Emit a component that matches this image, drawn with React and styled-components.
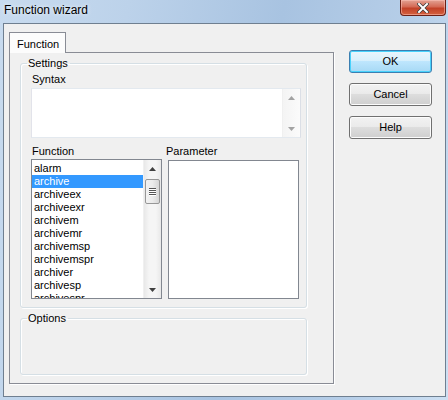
import React from "react";
import styled, { createGlobalStyle } from "styled-components";

const GlobalStyle = createGlobalStyle`
  html, body {
    margin: 0;
    padding: 0;
    background: #ffffff;
  }
  body {
    font-family: "Liberation Sans", Arial, sans-serif;
    font-size: 11px;
    color: #000;
  }
`;

const Window = styled.div`
  width: 448px;
  height: 400px;
  box-sizing: border-box;
  display: flex;
  flex-direction: column;
  padding: 0 2px 3px 3px;
  background: linear-gradient(
    100deg,
    #c8dbef 0%,
    #bcd2ea 25%,
    #a8c3e1 55%,
    #b6cee8 80%,
    #cde0f3 100%
  );
`;

const TitleBar = styled.div`
  height: 23px;
  display: flex;
  align-items: flex-start;
  justify-content: space-between;
`;

const Title = styled.span`
  font-size: 12px;
  line-height: 15px;
  margin-top: 3px;
  margin-left: 1px;
  color: #000;
  text-shadow: 0 0 4px rgba(255, 255, 255, 0.9);
`;

const CloseButton = styled.div`
  width: 46px;
  height: 16px;
  box-sizing: border-box;
  border: 1px solid #6b2016;
  border-top: none;
  border-radius: 0 0 4px 4px;
  background: linear-gradient(180deg, #e3a294 0%, #d46a55 45%, #c24128 55%, #d4613f 100%);
  display: flex;
  align-items: center;
  justify-content: center;
  box-shadow: inset 0 0 0 1px rgba(255, 200, 190, 0.5);
`;

const Client = styled.div`
  flex: 1;
  display: flex;
  background: #f0f0f0;
  border: 1px solid #6f7f90;
  padding: 8px 0 0 5px;
`;

const TabArea = styled.div`
  width: 325px;
  display: flex;
  flex-direction: column;
`;

const TabStrip = styled.div`
  display: flex;
  height: 20px;
  position: relative;
  z-index: 1;
`;

const Tab = styled.div`
  width: 57px;
  height: 21px;
  box-sizing: border-box;
  border: 1px solid #898c95;
  border-bottom: none;
  background: #fcfcfc;
  padding: 5px 0 0 7px;
  line-height: 13px;
`;

const TabPanel = styled.div`
  width: 325px;
  height: 332px;
  box-sizing: border-box;
  border: 1px solid #898c95;
  box-shadow: 1px 1px 0 #ffffff;
  background: #f0f0f0;
  padding: 4px 0 0 10px;
  display: flex;
  flex-direction: column;
  gap: 4px;
`;

const Group = styled.fieldset`
  margin: 0;
  width: 287px;
  height: ${(props) => props.height}px;
  box-sizing: border-box;
  border: 1px solid #d5dfe5;
  border-radius: 3px;
  box-shadow: inset 1px 1px 0 #ffffff, 1px 1px 0 #ffffff;
  padding: 0 5px 0 10px;
  display: flex;
  flex-direction: column;
`;

const Legend = styled.legend`
  padding: 0 2px 0 1px;
  margin-left: -4px;
  line-height: 13px;
`;

const Label = styled.div`
  line-height: 13px;
  margin: ${(props) => props.margin || "0"};
`;

const SyntaxBox = styled.div`
  margin-top: 2px;
  height: 50px;
  width: 270px;
  box-sizing: border-box;
  border: 1px solid #abadb3;
  border-top-color: #e3e9ef;
  border-left-color: #e2e3ea;
  border-right-color: #dbdfe6;
  border-bottom-color: #e3e9ef;
  background: #fff;
  display: flex;
  justify-content: flex-end;
`;

const ListsRow = styled.div`
  display: flex;
  gap: 6px;
  margin-top: 7px;
`;

const ListColumn = styled.div`
  display: flex;
  flex-direction: column;
`;

const ListBox = styled.div`
  margin-top: ${(props) => props.top || 1}px;
  width: 131px;
  height: ${(props) => props.h}px;
  box-sizing: border-box;
  border: 1px solid #828790;
  background: #fff;
  display: flex;
  overflow: hidden;
`;

const Items = styled.div`
  flex: 1;
  padding-top: 2px;
  overflow: hidden;
`;

const Item = styled.div`
  height: 13px;
  line-height: 13px;
  padding-left: 2px;
  white-space: nowrap;
  background: ${(props) => (props.selected ? "#3399ff" : "transparent")};
  color: ${(props) => (props.selected ? "#fff" : "#000")};
`;

const ScrollBar = styled.div`
  width: 17px;
  display: flex;
  flex-direction: column;
  background: ${(props) =>
    props.disabled
      ? "linear-gradient(90deg, #f4f4f4, #fbfbfb)"
      : "linear-gradient(90deg, #e8e8e8 0%, #f5f5f5 30%, #f5f5f5 70%, #e8e8e8 100%)"};
  border-left: 1px solid ${(props) => (props.disabled ? "#f0f0f0" : "#f0f0f0")};
`;

const ArrowCell = styled.div`
  height: 17px;
  display: flex;
  align-items: center;
  justify-content: center;
`;

const Track = styled.div`
  flex: 1;
  padding-top: 2px;
`;

const Thumb = styled.div`
  height: 25px;
  margin: 0 1px;
  box-sizing: border-box;
  border: 1px solid #979797;
  border-radius: 2px;
  background: linear-gradient(90deg, #f2f2f2 0%, #ebebeb 50%, #d6d6d6 100%);
  display: flex;
  flex-direction: column;
  align-items: center;
  justify-content: center;
  gap: 1px;
`;

const Grip = styled.div`
  width: 7px;
  height: 1px;
  background: #555;
  box-shadow: 0 1px 0 #fff;
`;

const ButtonColumn = styled.div`
  display: flex;
  flex-direction: column;
  gap: 10px;
  margin-left: 15px;
  padding-top: 18px;
`;

const Button = styled.div`
  width: 83px;
  height: 23px;
  box-sizing: border-box;
  border: 1px solid ${(props) => (props.primary ? "#3c7fb1" : "#707070")};
  border-radius: 3px;
  background: ${(props) =>
    props.primary
      ? "linear-gradient(180deg, #eaf6fd 0%, #d9f0fc 45%, #bee6fd 50%, #a7d9f5 100%)"
      : "linear-gradient(180deg, #f2f2f2 0%, #ebebeb 45%, #dddddd 50%, #cfcfcf 100%)"};
  box-shadow: inset 0 0 0 1px ${(props) => (props.primary ? "#48d2fc" : "#fcfcfc")};
  display: flex;
  align-items: center;
  justify-content: center;
  line-height: 13px;
`;

function Arrow({ down, color }) {
  return (
    <svg width="7" height="4" viewBox="0 0 7 4">
      <path
        d={down ? "M0 0 H7 L3.5 4 Z" : "M0 4 H7 L3.5 0 Z"}
        fill={color}
      />
    </svg>
  );
}

function Scroll({ disabled }) {
  const c = disabled ? "#a3a3a3" : "#404040";
  return (
    <ScrollBar disabled={disabled}>
      <ArrowCell>
        <Arrow color={c} />
      </ArrowCell>
      <Track>
        {!disabled && (
          <Thumb>
            <Grip />
            <Grip />
            <Grip />
            <Grip />
          </Thumb>
        )}
      </Track>
      <ArrowCell>
        <Arrow down color={c} />
      </ArrowCell>
    </ScrollBar>
  );
}

const functions = [
  "alarm",
  "archive",
  "archiveex",
  "archiveexr",
  "archivem",
  "archivemr",
  "archivemsp",
  "archivemspr",
  "archiver",
  "archivesp",
  "archivespr",
];

export default function App() {
  return (
    <>
      <GlobalStyle />
      <Window>
        <TitleBar>
          <Title>Function wizard</Title>
          <CloseButton>
            <svg width="12" height="10" viewBox="0 0 12 10">
              <path
                d="M2 1 L10 9 M10 1 L2 9"
                stroke="#3a3a3a"
                strokeWidth="3.4"
                strokeLinecap="square"
              />
              <path
                d="M2 1 L10 9 M10 1 L2 9"
                stroke="#ffffff"
                strokeWidth="2"
                strokeLinecap="square"
              />
            </svg>
          </CloseButton>
        </TitleBar>
        <Client>
          <TabArea>
            <TabStrip>
              <Tab>Function</Tab>
            </TabStrip>
            <TabPanel>
              <Group height={251}>
                <Legend>Settings</Legend>
                <Label margin="3px 0 0 1px">Syntax</Label>
                <SyntaxBox>
                  <Scroll disabled />
                </SyntaxBox>
                <ListsRow>
                  <ListColumn>
                    <Label margin="0 0 0 1px">Function</Label>
                    <ListBox h={140}>
                      <Items>
                        {functions.map((f) => (
                          <Item key={f} selected={f === "archive"}>
                            {f}
                          </Item>
                        ))}
                      </Items>
                      <Scroll />
                    </ListBox>
                  </ListColumn>
                  <ListColumn>
                    <Label margin="0 0 0 -2px">Parameter</Label>
                    <ListBox h={139} top={2} />
                  </ListColumn>
                </ListsRow>
              </Group>
              <Group height={63}>
                <Legend>Options</Legend>
              </Group>
            </TabPanel>
          </TabArea>
          <ButtonColumn>
            <Button primary>OK</Button>
            <Button>Cancel</Button>
            <Button>Help</Button>
          </ButtonColumn>
        </Client>
      </Window>
    </>
  );
}
